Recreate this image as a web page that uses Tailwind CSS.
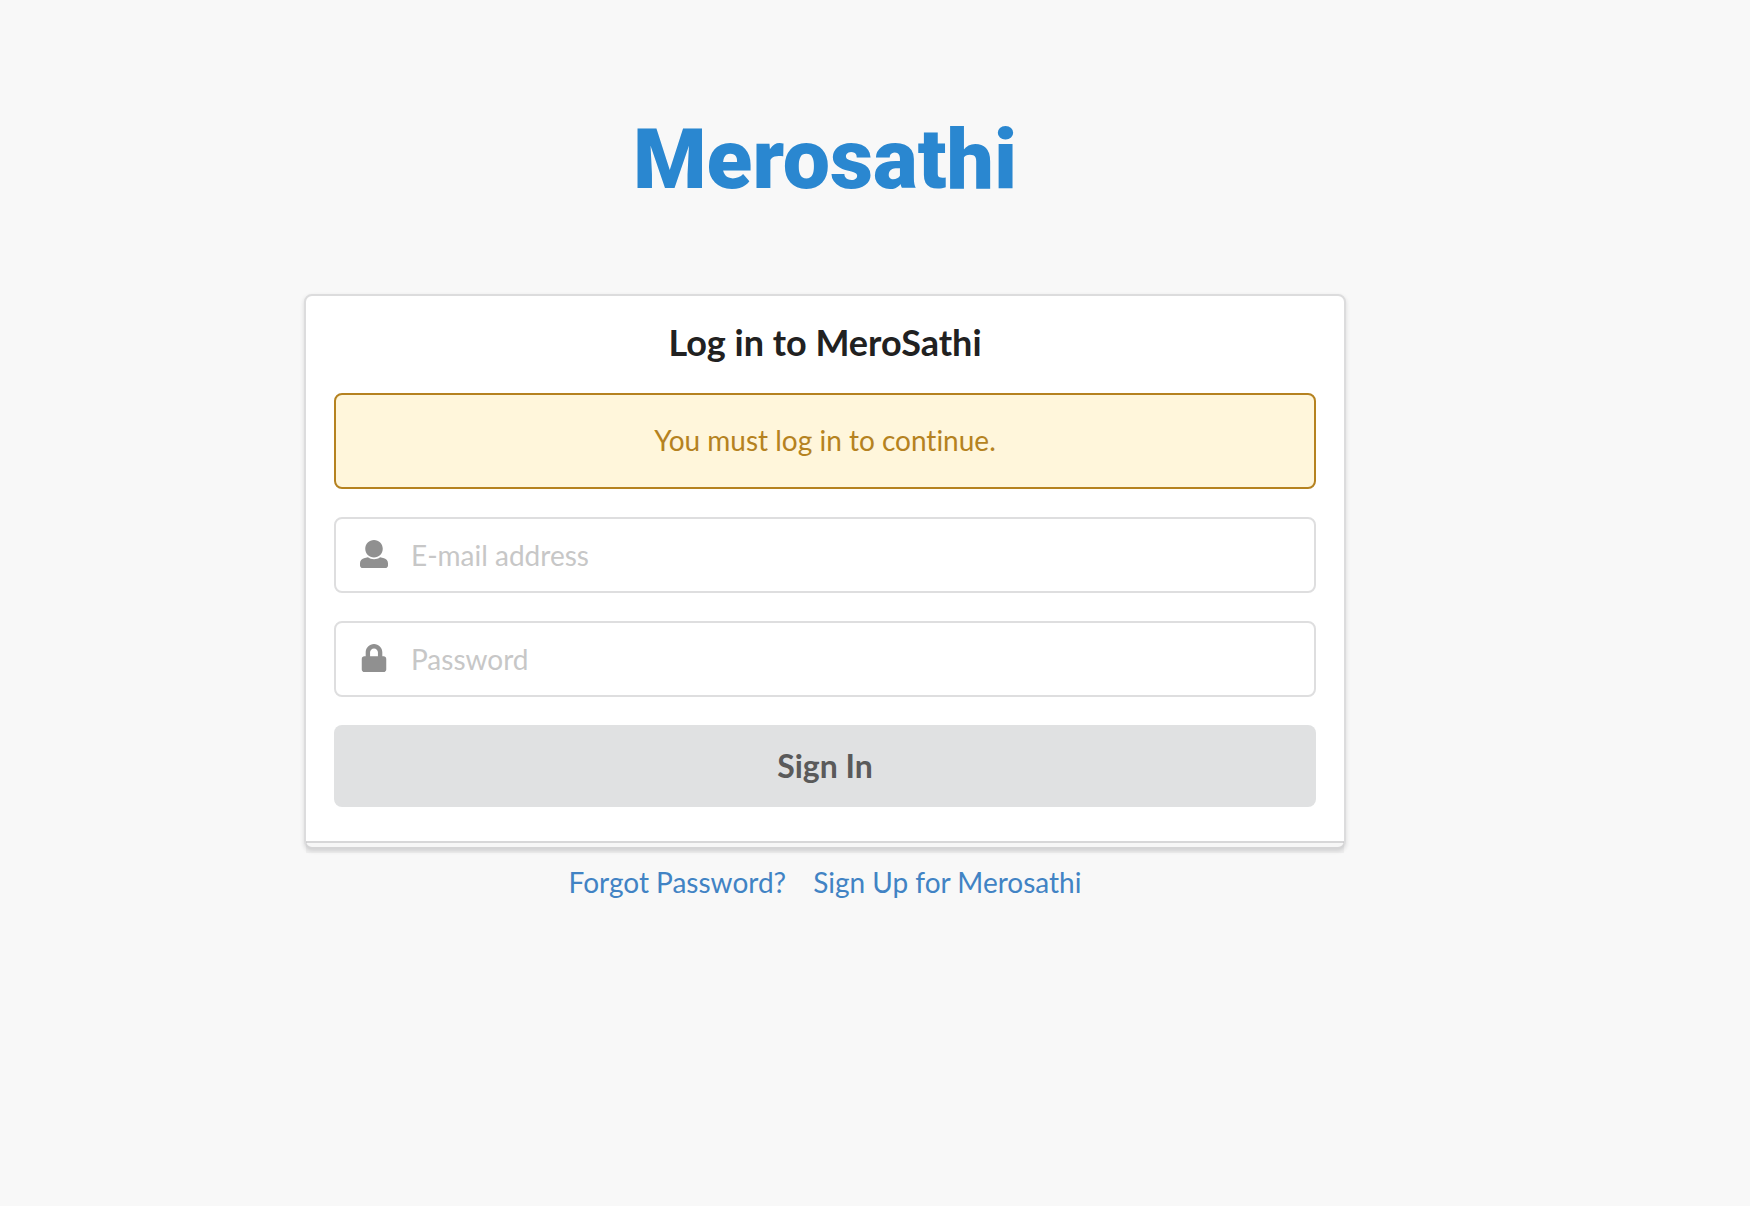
<!DOCTYPE html>
<html lang="en">
<head>
<meta charset="utf-8">
<title>Log in to MeroSathi</title>
<script src="https://cdn.jsdelivr.net/npm/@tailwindcss/browser@4"></script>
</head>
<body class="min-h-screen bg-[#f8f8f8] font-['Lato',sans-serif] text-[28px] leading-10 text-[#212121] [font-variant-ligatures:none]">
<main class="flex flex-col items-center pt-[110px] pr-[100px]">
  <h1 class="font-['Roboto',sans-serif] text-[84px] leading-[100px] font-black text-[#2a87d0]">Merosathi</h1>

  <form class="relative mt-[84px] w-full max-w-[1042px] rounded-lg border-2 border-[#dcdcdd] bg-white px-7 pt-6 pb-10 shadow-[0_2px_4px_0_rgba(34,36,38,0.15)]">
    <h2 class="text-center text-4xl leading-11 font-bold">Log in to MeroSathi</h2>
    <p class="mt-[29px] h-24 rounded-lg border-2 border-[#b58220] bg-[#fff6db] pt-[25px] text-center text-[#b58220]">You must log in to continue.</p>

    <div class="relative mt-7">
      <input type="email" aria-label="E-mail address" placeholder="E-mail address" class="block h-[76px] w-full rounded-lg border-2 border-[#dededf] bg-white pr-7 pl-[75px] placeholder:text-[#c7c7c7]">
      <svg class="pointer-events-none absolute top-[23px] left-[26px] h-7 w-7 fill-[#909090]" viewBox="0 0 512 512" aria-hidden="true"><path d="M256 0c88.366 0 160 71.634 160 160s-71.634 160-160 160S96 248.366 96 160 167.634 0 256 0zm183.283 333.821l-71.313-17.828c-74.923 53.89-165.738 41.864-223.94 0l-71.313 17.828C29.981 344.505 0 382.903 0 426.955V464c0 26.51 21.49 48 48 48h416c26.51 0 48-21.49 48-48v-37.045c0-44.052-29.981-82.45-72.717-93.134z"/></svg>
    </div>

    <div class="relative mt-7">
      <input type="password" aria-label="Password" placeholder="Password" class="block h-[76px] w-full rounded-lg border-2 border-[#dededf] bg-white pr-7 pl-[75px] placeholder:text-[#c7c7c7]">
      <svg class="pointer-events-none absolute top-[23px] left-[26px] h-7 w-7 fill-[#909090]" viewBox="0 0 448 512" aria-hidden="true"><path d="M400 224h-24v-72C376 68.2 307.8 0 224 0S72 68.2 72 152v72H48c-26.5 0-48 21.5-48 48v192c0 26.5 21.5 48 48 48h352c26.5 0 48-21.5 48-48V272c0-26.5-21.5-48-48-48zm-104 0H152v-72c0-39.7 32.3-72 72-72s72 32.3 72 72v72z"/></svg>
    </div>

    <button type="submit" class="mt-7 block h-[82px] w-full rounded-lg bg-[#e0e1e2] text-[32px] font-bold text-[#5a5a5a]">Sign In</button>
    <div class="absolute -bottom-1.5 left-0 h-3 w-full border-t-2 border-[#222426]/15 bg-black/3"></div>
  </form>

  <nav class="mt-[13px] flex gap-[27px] text-[#4183c4]">
    <a href="#forgot">Forgot Password?</a>
    <a href="#signup">Sign Up for Merosathi</a>
  </nav>
</main>
</body>
</html>
